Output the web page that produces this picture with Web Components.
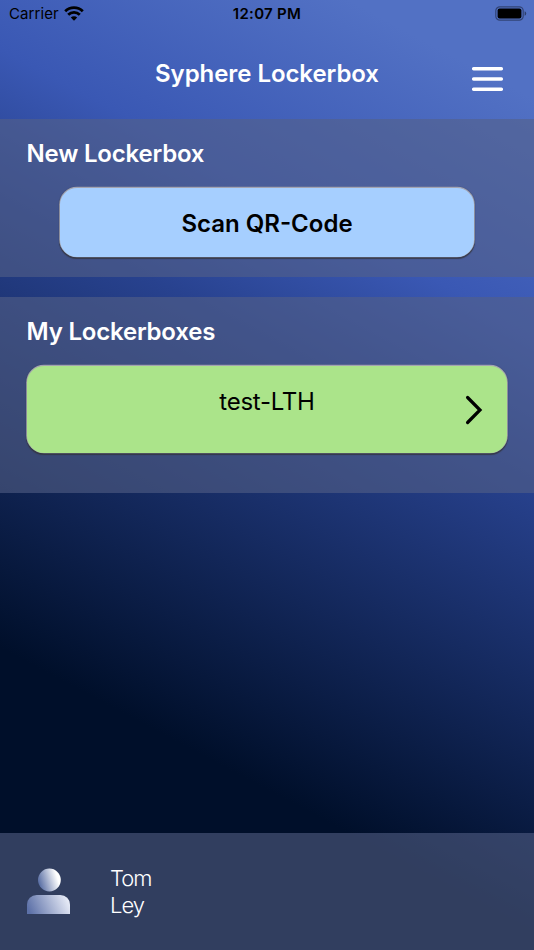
<!DOCTYPE html>
<html lang="en">
  <head>
    <meta charset="utf-8">
    <title>Syphere Lockerbox</title>
    <style>
      body {
        margin: 0;
        font-family: Inter, "Liberation Sans", sans-serif;
      }
    </style>
  </head>
  <body>

    <lockerbox-app>
      <status-bar slot="top" carrier="Carrier" time="12:07 PM"></status-bar>
      <app-header slot="top">Syphere Lockerbox</app-header>

      <box-section style="height: 158px">
        <span slot="title">New Lockerbox</span>
        <scan-button>Scan QR-Code</scan-button>
      </box-section>

      <box-section style="height: 196px">
        <span slot="title">My Lockerboxes</span>
        <locker-item>test-LTH</locker-item>
      </box-section>

      <user-footer slot="bottom">
        <span slot="first">Tom</span>
        <span slot="last">Ley</span>
      </user-footer>
    </lockerbox-app>

    <script>
      (function lockerbox(customElements) {
        'use strict';

        // Registers an element whose shadow root is filled by render(host)
        function define(name, render) {
          customElements.define(name, class extends HTMLElement {
            constructor() {
              super();
              this.attachShadow({mode: 'open'}).innerHTML = render(this);
            }
          });
        }

        define('lockerbox-app', () => `
          <style>
            :host {
              display: flex;
              flex-direction: column;
              height: 950px;
              width: 534px;
              overflow: hidden;
              --panel: rgba(84, 97, 134, 0.58);
              background: linear-gradient(28deg,
                #000f2a 24.5%, #28428f 61%, #3a58b4 73%, #5271c4 92%);
            }

            main {
              display: flex;
              flex-direction: column;
              gap: 20px;
              flex: 1;
            }
          </style>
          <slot name="top"></slot>
          <main><slot></slot></main>
          <slot name="bottom"></slot>
        `);

        define('status-bar', host => `
          <style>
            :host {
              display: grid;
              grid-template-columns: 1fr auto 1fr;
              align-items: center;
              box-sizing: border-box;
              height: 28px;
              padding: 0 7px 0 9px;
              font-size: 15px;
              color: #000;
            }

            .carrier {
              display: flex;
              align-items: center;
              gap: 5px;
              letter-spacing: 0.1px;
            }

            .carrier span {
              margin-top: -1px;
            }

            .time {
              margin: -1px 2px 0 0;
              font-weight: 600;
              letter-spacing: 0.3px;
            }

            .battery {
              justify-self: end;
              margin-top: -2px;
            }

            .wifi {
              margin-top: -2px;
            }

            svg {
              display: block;
            }
          </style>
          <div class="carrier">
            <span>${host.getAttribute('carrier')}</span>
            <svg class="wifi" width="20" height="15" viewBox="0 0 20 15" fill="none" stroke="#000" stroke-width="2.8">
              <path d="M1.2 5.3a12.6 12.6 0 0 1 17.6 0"/>
              <path d="M4.2 8.8a8.3 8.3 0 0 1 11.6 0"/>
              <path d="M10 14.8L6.8 11.600a4.6 4.6 0 0 1 6.4 0z" fill="#000" stroke="none"/>
            </svg>
          </div>
          <div class="time">${host.getAttribute('time')}</div>
          <svg class="battery" width="32" height="15" viewBox="0 0 32 15">
            <rect x="0.8" y="0.8" width="27.4" height="13.4" rx="4" fill="none" stroke="#000" stroke-opacity="0.4" stroke-width="1.2"/>
            <rect x="2.6" y="2.5" width="23.8" height="10" rx="2"/>
            <path d="M29.6 5.2q1.6.6 1.6 2.3t-1.6 2.3z" fill-opacity="0.45"/>
          </svg>
        `);

        define('app-header', () => `
          <style>
            :host {
              display: grid;
              grid-template-columns: 1fr auto 1fr;
              height: 91px;
              color: #fff;
            }

            h1 {
              grid-column: 2;
              margin: 31px 0 0;
              font-size: 24px;
              font-weight: 600;
              line-height: 30px;
              letter-spacing: -0.06px;
            }

            svg {
              justify-self: end;
              margin: 38px 30px 0 0;
            }
          </style>
          <h1><slot></slot></h1>
          <svg width="33" height="26" viewBox="0 0 33 26" stroke="#fff" stroke-width="3.4" stroke-linecap="round">
            <path d="M2.6 2.7h27.8M2.6 13h27.8M2.6 23.2h27.8"/>
          </svg>
        `);

        define('box-section', () => `
          <style>
            :host {
              display: flex;
              flex-direction: column;
              box-sizing: border-box;
              padding: 19px 27px 0;
              gap: 19px;
              background: var(--panel);
            }

            h2 {
              margin: 0 0 0 -0.5px;
              font-size: 24px;
              font-weight: 600;
              line-height: 31px;
              letter-spacing: -0.2px;
              color: #fff;
            }
          </style>
          <h2><slot name="title"></slot></h2>
          <slot></slot>
        `);

        const raised = `
          border-radius: 17px;
          box-shadow: 0 -0.5px 0.5px 0.8px rgba(190, 190, 200, 0.8),
            0 0.5px 1px 0.8px rgba(50, 50, 55, 0.75);
        `;

        define('scan-button', () => `
          <style>
            :host {
              display: flex;
              align-items: center;
              justify-content: center;
              box-sizing: border-box;
              height: 69px;
              margin: 0 33px;
              padding-top: 2px;
              font-size: 24px;
              font-weight: 600;
              color: #000;
              background: #a6cfff;
              ${raised}
            }
          </style>
          <span><slot></slot></span>
        `);

        define('locker-item', () => `
          <style>
            :host {
              display: grid;
              grid-template-columns: 1fr auto 1fr;
              height: 87px;
              font-size: 24px;
              letter-spacing: -0.25px;
              color: #000;
              background: #abe48a;
              ${raised}
            }

            span {
              grid-column: 2;
              margin-top: 20px;
              line-height: 31px;
            }

            svg {
              align-self: center;
              justify-self: end;
              margin: 1px 24px 0 0;
            }
          </style>
          <span><slot></slot></span>
          <svg width="18" height="30" viewBox="0 0 18 30" fill="none" stroke="#000" stroke-width="3.2" stroke-linecap="round">
            <path d="M2.6 2.500L15 15L2.6 27.500"/>
          </svg>
        `);

        define('user-footer', () => `
          <style>
            :host {
              display: flex;
              align-items: flex-start;
              gap: 40px;
              box-sizing: border-box;
              height: 117px;
              padding: 32px 27px 0;
              color: #fff;
              background: var(--panel);
            }

            svg {
              margin-top: 3px;
            }

            .name {
              display: flex;
              flex-direction: column;
              font-size: 22px;
              font-weight: 350;
              line-height: 26.5px;
              letter-spacing: -1px;
            }
          </style>
          <svg width="43" height="47" viewBox="0 0 43 47">
            <defs>
              <linearGradient id="head" x1="0" y1="0.65" x2="1" y2="0.35">
                <stop offset="0" stop-color="#5268a0"/>
                <stop offset="0.85" stop-color="#fff"/>
              </linearGradient>
              <linearGradient id="body" x1="0" y1="0.6" x2="1" y2="0.4">
                <stop offset="0" stop-color="#5d71a8"/>
                <stop offset="1" stop-color="#e9edf8"/>
              </linearGradient>
            </defs>
            <circle cx="22.4" cy="12" r="11.4" fill="url(#head)"/>
            <path d="M0 46V36.600A9.600 9.600 0 0 1 9.600 27H33.400A9.600 9.600 0 0 1 43 36.600V46Z" fill="url(#body)"/>
          </svg>
          <div class="name">
            <slot name="first"></slot>
            <slot name="last"></slot>
          </div>
        `);
      })(window.customElements);
    </script>
  </body>
</html>
